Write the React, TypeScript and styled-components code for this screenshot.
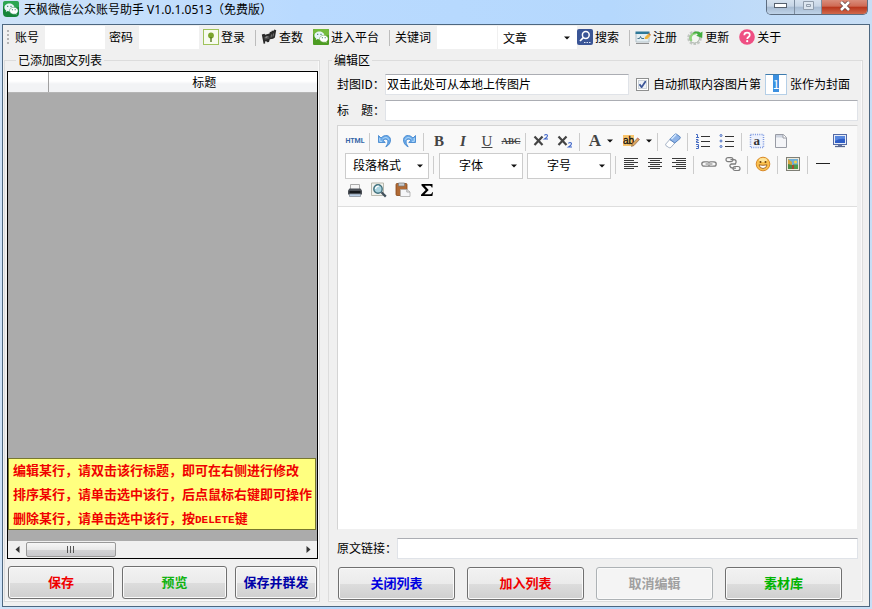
import React, { useEffect, useRef } from "react";
import styled, { createGlobalStyle } from "styled-components";

const sans = `"Noto Sans CJK SC", "Noto Sans", sans-serif`;
const serif = `"Liberation Serif", "Noto Sans CJK SC", serif`;

const Global = createGlobalStyle`
  *, *::before, *::after { box-sizing: border-box; }
  body { margin: 0; font: 12px/16px ${sans}; color: #000; background: #b9d8f8; }
  button, input, select, textarea { font: inherit; color: inherit; }
  button { padding: 0; margin: 0; background: none; border: 0; }
`;

const Window = styled.div`
  display: flex;
  flex-direction: column;
  min-height: 100vh;
  padding: 0 2px 2px;
  background: linear-gradient(90deg, #cfe3f8 0, #b9daff 300px, #b5d8fd 70%, #c8def5 100%);
`;

const TitleBar = styled.header`
  display: flex;
  align-items: flex-start;
  height: 24px;
  padding: 0 2px 0 1px;
`;

const Caption = styled.h1`
  flex: 1;
  margin: 1px 0 0;
  padding-left: 5px;
  font: 12px/18px "Noto Sans", ${sans};
  white-space: nowrap;
`;

const AppMark = styled.span`
  display: flex;
  padding-top: 1px;
`;

const WindowButtons = styled.div`
  display: flex;
  border: 1px solid #5d6d80;
  border-top: 0;
  border-radius: 0 0 5px 5px;
  overflow: hidden;
`;

const WindowButton = styled.button<{ $close?: boolean }>`
  display: flex;
  align-items: center;
  justify-content: center;
  width: ${(p) => (p.$close ? 46 : 27)}px;
  height: 14px;
  padding-bottom: 3px;
  background: ${(p) =>
    p.$close
      ? "linear-gradient(#d98d7c 0, #cf6a54 45%, #b8341b 50%, #d0694c 100%)"
      : "linear-gradient(#d6e2ef 0, #c6d5e6 45%, #a7bbd2 50%, #bfd3e8 100%)"};
  & + & { border-left: 1px solid #7d8da0; }
`;

const Client = styled.main`
  flex: 1;
  display: flex;
  flex-direction: column;
  background: #f0f0f0;
  border: 1px solid #4d6780;
`;

const Strip = styled.div`
  display: flex;
  align-items: center;
  height: 25px;
  padding-left: 4px;
  white-space: nowrap;
`;

const Grip = styled.span`
  width: 2px;
  height: 16px;
  margin-right: 6px;
  background: repeating-linear-gradient(#b4b4b4 0 2px, transparent 2px 4px);
`;

const StripLabel = styled.label`
  margin-right: 6px;
  padding-bottom: 2px;
`;

const StripInput = styled.input<{ $flush?: boolean }>`
  width: 60px;
  height: 23px;
  padding: 0 3px;
  margin-right: ${(p) => (p.$flush ? 1 : 4)}px;
  border: 0;
  background: #fff;
`;

const StripAction = styled.button`
  display: flex;
  align-items: center;
  gap: 2px;
  margin-right: 10px;
  padding-bottom: 2px;
`;

const StripRule = styled.span`
  width: 1px;
  height: 16px;
  margin-right: 5px;
  background: #bcbcbc;
`;

const Drop = styled.span<{ $framed?: boolean }>`
  display: grid;
  align-items: center;
  justify-items: end;
  width: ${(p) => (p.$framed ? 84 : 79)}px;
  height: ${(p) => (p.$framed ? 26 : 23)}px;
  margin: 0 ${(p) => (p.$framed ? 2 : 0)}px;
  background: #fff;
  border: ${(p) => (p.$framed ? "1px solid #ccc" : "0")};
  > * { grid-area: 1 / 1; }
  > svg { margin-right: ${(p) => (p.$framed ? 5 : 7)}px; pointer-events: none; }
`;

const DropSelect = styled.select<{ $centered?: boolean }>`
  appearance: none;
  width: 100%;
  height: 100%;
  border: 0;
  background: transparent;
  padding: ${(p) => (p.$centered ? "0 20px 2px 0" : "0 16px 0 5px")};
  text-align-last: ${(p) => (p.$centered ? "center" : "left")};
`;

const Body = styled.div`
  flex: 1;
  display: grid;
  grid-template-columns: 316px minmax(0, 1fr);
  gap: 8px;
  padding: 4px 6px 4px 1px;
`;

const Group = styled.fieldset<{ $wide?: boolean }>`
  display: flex;
  flex-direction: column;
  min-width: 0;
  margin: 0;
  padding: ${(p) => (p.$wide ? "8px 4px 1px 8px" : "5px 1px 2px 2px")};
  border: 1px solid #dcdcdc;
  box-shadow: inset -1px -1px #fafafa;
`;

const GroupTitle = styled.legend<{ $indent: number }>`
  margin-left: ${(p) => p.$indent}px;
  padding: 0 2px;
  height: 12px;
  line-height: 12px;
`;

const ListFrame = styled.div`
  flex: 1;
  display: flex;
  flex-direction: column;
  border: 1px solid #000;
  background: #ababab;
`;

const ListTable = styled.table`
  width: 100%;
  border-collapse: collapse;
  table-layout: fixed;
`;

const HeadCell = styled.th<{ $marker?: boolean }>`
  width: ${(p) => (p.$marker ? "40px" : "auto")};
  height: 20px;
  padding: 0 0 0 ${(p) => (p.$marker ? 0 : 43)}px;
  font-weight: 400;
  line-height: 18px;
  background: linear-gradient(#fff 0, #fff 45%, #f2f3f5 60%, #f2f3f5 100%);
  border-bottom: 1px solid #b5b5b5;
  border-right: ${(p) => (p.$marker ? "1px solid #a0a0a0" : "0")};
`;

const Tips = styled.div`
  margin: auto 1px 11px 0;
  padding: 0 0 0 4px;
  border: 1px solid #77772d;
  background: #ffff80;
  color: #f00000;
  font: bold 13px/22px ${sans};
  white-space: nowrap;
`;

const Tip = styled.p`
  margin: 0;
  height: 22px;
  & + & { margin-top: 2px; }
`;

const KeyName = styled.kbd`
  font: bold 11px/22px "Liberation Mono", monospace;
`;

const ScrollBar = styled.div`
  display: flex;
  align-items: center;
  height: 17px;
  background: #f0f0f0;
`;

const ScrollArrow = styled.button`
  display: flex;
  align-items: center;
  justify-content: center;
  width: 18px;
  height: 17px;
`;

const ScrollTrack = styled.div`
  flex: 1;
`;

const ScrollThumb = styled.div`
  display: flex;
  align-items: center;
  justify-content: center;
  width: 90px;
  height: 15px;
  border: 1px solid #989898;
  border-radius: 2px;
  background: linear-gradient(#f6f6f6 0, #e8e8e8 50%, #d3d3d5 55%, #c9c9cc 100%);
`;

const ListButtons = styled.div`
  display: grid;
  grid-template-columns: 106fr 105fr 82fr;
  gap: 8px;
  margin: 7px 1px 0;
`;

const EditButtons = styled.div`
  display: grid;
  grid-template-columns: repeat(4, 1fr);
  gap: 12px;
  margin: 8px 16px 0 1px;
`;

const PushButton = styled.button<{ $ink: string }>`
  height: 33px;
  padding-bottom: 2px;
  border: 1px solid #707070;
  border-radius: 3px;
  box-shadow: inset 0 0 0 1px #fafafa;
  background: linear-gradient(#f2f2f2 0, #ebebeb 50%, #dddddd 51%, #cfcfcf 100%);
  color: ${(p) => p.$ink};
  font: bold 13px/18px ${sans};
  &:disabled {
    border-color: #adb2b5;
    background: #f4f4f4;
  }
`;

const FormRow = styled.div<{ $top?: number }>`
  display: flex;
  align-items: center;
  margin-top: ${(p) => p.$top ?? 0}px;
  white-space: nowrap;
`;

const FormLabel = styled.label<{ $width?: number }>`
  width: ${(p) => (p.$width ? `${p.$width}px` : "auto")};
  padding-bottom: 2px;
`;

const Field = styled.input`
  flex: 1;
  min-width: 0;
  height: 21px;
  padding: 0 1px 2px;
  background: #fff;
  border: 1px solid #e0e3e8;
  border-top-color: #abadb3;
`;

const Check = styled.input`
  appearance: none;
  width: 13px;
  height: 13px;
  margin: 0 4px 0 7px;
  border: 1px solid #8e8f8f;
  background: #f2f5f8;
  box-shadow: inset 0 0 0 1px #fff, inset 0 0 0 2px #ccd3da;
  &:checked {
    background: #eef2f6
      url("data:image/svg+xml,%3Csvg xmlns='http://www.w3.org/2000/svg' viewBox='0 0 11 11'%3E%3Cpath d='M2.5 5.2 4.6 8.2 8.8 2' fill='none' stroke='%233b5698' stroke-width='1.8'/%3E%3C/svg%3E");
  }
`;

const IndexField = styled.input`
  width: 22px;
  height: 21px;
  margin: 0 3px 0 4px;
  padding: 0 0 2px;
  text-align: center;
  background: #fff;
  border: 1px solid #b5cfe7;
  border-top-color: #3d7bad;
  outline: 0;
  &::selection { background: #3c90e0; color: #fff; }
`;

const RowEnd = styled.span`
  margin-right: 8px;
  padding-bottom: 2px;
`;

const Editor = styled.section`
  flex: 1;
  display: flex;
  flex-direction: column;
  margin-top: 4px;
  border: 1px solid #d4d4d4;
  border-right-color: #f0f0f0;
  border-bottom-color: #f0f0f0;
  background: #fff;
`;

const EditorTools = styled.div`
  padding: 4px 5px 4px 5px;
  background: #f9f9f9;
  border-bottom: 1px solid #dedede;
`;

const ToolRow = styled.div<{ $tall?: boolean }>`
  display: flex;
  align-items: flex-start;
  height: ${(p) => (p.$tall ? 26 : 23)}px;
`;

const Tool = styled.button<{ $menu?: boolean; $end?: boolean }>`
  display: flex;
  align-items: center;
  justify-content: center;
  gap: 6px;
  width: ${(p) => (p.$menu ? 36 : 24)}px;
  height: 22px;
  margin-left: ${(p) => (p.$end ? "auto" : "0")};
`;

const ToolRule = styled.span`
  width: 1px;
  height: 18px;
  margin: 3px 3px 0 2px;
  background: #ccc;
`;

const Glyph = styled.span<{ $look?: "italic" | "under" | "strike" | "code" | "plain" }>`
  color: ${(p) => (p.$look === "code" ? "#3566a8" : "#444")};
  font-family: ${(p) => (p.$look === "code" ? "Roboto, sans-serif" : serif)};
  font-size: ${(p) => (p.$look === "code" ? 7 : p.$look === "strike" ? 9 : p.$look === "plain" ? 17 : 15)}px;
  font-weight: ${(p) => (p.$look === "under" ? 400 : 700)};
  font-style: ${(p) => (p.$look === "italic" ? "italic" : "normal")};
  text-decoration: ${(p) => (p.$look === "under" ? "underline" : p.$look === "strike" ? "line-through" : "none")};
`;

const Content = styled.textarea`
  flex: 1;
  width: 100%;
  padding: 6px;
  border: 0;
  outline: 0;
  resize: none;
  background: #fff;
`;

type IconProps = { children: React.ReactNode; w?: number; h?: number };
const Icon = ({ children, w = 16, h = 16 }: IconProps) => (
  <svg width={w} height={h} viewBox={`0 0 ${w} ${h}`} fill="none" aria-hidden="true">
    {children}
  </svg>
);

const Caret = () => (
  <Icon w={6} h={4}><path d="M0 .5h6L3 3.5z" fill="#111" /></Icon>
);

const WeChat = ({ round }: { round?: boolean }) => (
  <Icon>
    <rect width="16" height="16" rx={round ? 4 : 1} fill={round ? "#16853a" : "#4d9c22"} />
    <path d="M0 2q0-2 2-2h12q2 0 2 2v4Q8 9 0 5z" fill={round ? "#2ca653" : "#74bb3d"} />
    <path d="M6.4 2.4c-2.8 0-5 1.8-5 4 0 1.3.7 2.4 1.8 3.1l-.4 1.6 1.9-1c.5.2 1.1.3 1.7.3 2.800 0 5-1.800 5-4s-2.200-4-5-4z" fill="#e9f5f8" />
    <path d="M10.800 6.300c-2.400 0-4.300 1.500-4.300 3.400s1.900 3.500 4.300 3.500c.5 0 1-.1 1.400-.2l1.700.9-.4-1.400c1-.7 1.600-1.700 1.600-2.800 0-1.900-1.900-3.400-4.300-3.400z" fill="#fff" stroke={round ? "#2f8b55" : "#66a545"} strokeWidth=".5" />
    <path d="M4.700 4.700v1.200M8 4.700v1.200M9.400 8.300v1M12.200 8.300v1" stroke="#3c7c6a" strokeWidth="1.100" />
  </Icon>
);

const LoginIcon = () => (
  <Icon>
    <rect x=".5" y=".5" width="15" height="15" fill="#f7fbef" stroke="#9fc25b" />
    <circle cx="8" cy="6.500" r="2.900" fill="#7ba52d" />
    <path d="M8 8v5" stroke="#54791c" strokeWidth="1.400" />
  </Icon>
);

const CountIcon = () => (
  <Icon>
    <path d="m.8 5.500 2.700-.8.600 1 4.400-1.200.4-1.700 1.300.3.700-1.700 1.300.5 1.200-1.500 1.800.8-1.300 7.200-1.800 1.300-3.300.5-.8 2.700-2 .3-.5-1-1.500.4.200 1.800-1.600.400z" fill="#2a2a2a" />
    <path d="m3.200 8 5-1.200.3 3-4.700 1z" fill="#505050" />
    <path d="m4.500 8.300 2-.5" stroke="#b5b5b5" />
    <path d="m10.500 5.500-.5 3M12.500 4.500 12 7.500" stroke="#8a8a8a" strokeWidth=".8" />
  </Icon>
);

const SearchIcon = () => (
  <Icon>
    <rect width="16" height="16" rx="2" fill="#3a5596" />
    <circle cx="8.800" cy="6" r="3.400" stroke="#fff" strokeWidth="1.500" />
    <path d="M6.300 8.600 3 12" stroke="#fff" strokeWidth="1.700" />
    <path d="M7 13.500h1.500M9.500 13.500H11M12 13.500h1.500" stroke="#dde6f6" />
  </Icon>
);

const RegisterIcon = () => (
  <Icon>
    <path d="M1 4h13v9H1z" fill="#e3edf2" stroke="#b4c2c9" />
    <path d="M.5 2.500h14v2.500H.5z" fill="#2f7898" />
    <path d="M2.500 9.500h2l1-2 1 2H9" stroke="#43728a" />
    <path d="m9.500 10 .5-2 3-3 2.300 1.800-3 3.200z" fill="#efb43d" />
    <path d="m13 5 1-1 2 1.700-.8 1.100z" fill="#c97b3a" />
    <path d="M1 14.500h13" stroke="#8f8f8f" />
  </Icon>
);

const UpdateIcon = () => (
  <Icon>
    <circle cx="7.500" cy="9" r="5.800" stroke="#c3c8c3" strokeWidth="3" strokeDasharray="2.500 1.200" />
    <circle cx="7.500" cy="9" r="5" fill="#f3f6f1" stroke="#aeb6ae" />
    <path d="M4.500 12C2 8 5 4 9 4.500" stroke="#8fd37d" strokeWidth="2.200" />
    <path d="M6 3.800c2.500-2 6-1.700 7.500 0l2-1.300-.3 6.500-6-2.200 2-1.300C10 4.300 8 3.800 6 4.800z" fill="#43ae3e" />
  </Icon>
);

const AboutIcon = () => (
  <Icon>
    <circle cx="8" cy="8" r="7.800" fill="#ef4f83" />
    <path d="M5.300 6.200C5.300 4.700 6.400 3.700 8 3.700s2.800 1 2.800 2.300c0 2-2.600 2-2.600 4" stroke="#fff" strokeWidth="1.700" />
    <circle cx="8.200" cy="12.200" r="1.100" fill="#fff" />
  </Icon>
);

const UndoIcon = ({ flip }: { flip?: boolean }) => (
  <Icon>
    <g transform={flip ? "matrix(-1 0 0 1 16 0)" : undefined}>
      <path d="M1.500 2.500v7h6.800L6 7.300c1.300-1.400 3.900-1.600 4.700.3.700 1.700-.2 3.900-1.900 6.200 3-1.200 5-4.200 4.700-7.300C13 2.200 7.800.8 4 5z" fill="#6aaae9" stroke="#3a80cb" strokeWidth=".8" />
      <path d="M2.800 5v3.300H5M5.500 6c2-2 5.500-2 6.300.8" stroke="#b9ddfa" />
    </g>
  </Icon>
);

const ScriptIcon = ({ low }: { low?: boolean }) => (
  <Icon>
    <path d="m1.500 3.500 8 8.500M9.500 3.500l-8 8.500" stroke="#444" strokeWidth="2.200" />
    <path transform={low ? "translate(0 9)" : "translate(0 1)"} d="M11.500 1.500q0-1 1.500-1 1.500 0 1.500 1.300 0 1.200-3 3.200h3.500" stroke="#3b62c8" strokeWidth="1.100" />
  </Icon>
);

const HighlightIcon = () => (
  <Icon w={17}>
    <rect y="2" width="11" height="11" fill="#f8c46c" />
    <text x="0" y="11" fontFamily="Liberation Sans, sans-serif" fontSize="10" fill="#111" stroke="#111" strokeWidth=".3">ab</text>
    <path d="m8.500 13.500 1-3 5-5.500 2 1.500-5.500 6z" fill="#dba45e" stroke="#81613d" strokeWidth=".6" />
    <path d="m14 5 2 1.500" stroke="#db7363" />
  </Icon>
);

const EraserIcon = () => (
  <Icon>
    <path d="m.8 11 4-4.500 5 3.500-4 4.500q-1 .6-2 0l-2.800-1.800q-.8-.7-.2-1.700z" fill="#fff" stroke="#8fa0b8" strokeWidth=".8" />
    <path d="m4.800 6.500 4.700-5q1-1 2-.3l3.300 2.400q1 .9.200 2L9.800 10z" fill="#8fb4e8" stroke="#4373b5" strokeWidth=".8" />
    <path d="m6.500 6 4.500-4.500" stroke="#d2e7fd" strokeWidth="1.600" />
  </Icon>
);

const ListIcon = ({ numbered }: { numbered?: boolean }) => (
  <Icon>
    <path d="M6 3.500h9M6 8.500h9M6 13.500h9" stroke="#333" />
    {numbered ? (
      <path d="M1 1.500h1.500v3M1 4.500h3M1 6.500h2v1.500H1.500v1.500H4M1 11.500h2.500v4H1M1.500 13.500h2" stroke="#456bc2" />
    ) : (
      <g stroke="#456bc2"><circle cx="2" cy="2.500" r="1" /><circle cx="2" cy="8" r="1" /><circle cx="2" cy="13.500" r="1" /></g>
    )}
  </Icon>
);

const AnchorIcon = () => (
  <Icon>
    <rect x="1.500" y="1.500" width="13" height="13" fill="#eef2fd" stroke="#7b97e0" strokeWidth="1.500" strokeDasharray="1 1.200" />
    <text x="4.500" y="12" fontFamily="Liberation Serif, serif" fontSize="13" fontWeight="700" fill="#333">a</text>
  </Icon>
);

const PageIcon = () => (
  <Icon>
    <path d="M2.500 1.500h8l3 3v10h-11z" fill="#f4f5f8" stroke="#999ca5" />
    <path d="M3 2h7v2.500H3z" fill="#cdd3df" />
    <path d="M10 1.500v3.500h3.500" fill="#fff" stroke="#999ca5" />
  </Icon>
);

const ScreenIcon = () => (
  <Icon>
    <rect x="1.500" y="1.500" width="13" height="10" fill="#e7ecf7" stroke="#5269a5" />
    <path d="M3 3h10v7H3z" fill="#2e5dc6" />
    <path d="M3 3h10v3Q8 5 3 8z" fill="#5787df" />
    <path d="M6 12h4v1.500H6z" fill="#6c7897" />
    <path d="M3 13.500h10" stroke="#566791" strokeWidth="1.300" />
  </Icon>
);

const AlignIcon = ({ side }: { side: "left" | "center" | "right" }) => {
  const start = { left: 1, center: 3, right: 5 }[side];
  return (
    <Icon>
      {[2, 4, 6, 8, 10, 12].map((y, i) => (
        <path key={y} d={i % 2 ? `M${start} ${y + 0.5}h10` : `M1 ${y + 0.5}h14`} stroke="#3a3a3a" />
      ))}
    </Icon>
  );
};

const LinkIcon = () => (
  <Icon>
    <rect x=".8" y="5.800" width="7.700" height="4.400" rx="2.200" stroke="#7d7d7d" strokeWidth="1.300" />
    <rect x="7.500" y="5.800" width="7.700" height="4.400" rx="2.200" stroke="#7d7d7d" strokeWidth="1.300" />
    <path d="M4 8h8" stroke="#fff" strokeWidth="2.400" /><path d="M4.500 8h7" stroke="#777" />
  </Icon>
);

const UnlinkIcon = () => (
  <Icon>
    <rect x="1" y="1.700" width="7" height="4" rx="2" stroke="#7d7d7d" strokeWidth="1.200" />
    <rect x="8" y="10.500" width="7" height="4" rx="2" stroke="#7d7d7d" strokeWidth="1.200" />
    <path d="M5.500 3.700H9q2.500.3 2 2.500L10.300 8H6.500q-2 .5-1.500 2.200.5 1.800 3 2H11" stroke="#7d7d7d" strokeWidth="1.300" />
  </Icon>
);

const SmileIcon = () => (
  <Icon>
    <circle cx="8" cy="8" r="6.800" fill="#fac04e" stroke="#d98a29" />
    <ellipse cx="8" cy="4" rx="4" ry="2" fill="#fde49b" />
    <path d="M4 8.800q4 1 8 0-.5 3.700-4 3.700T4 8.800z" fill="#fff" stroke="#9d5f1d" strokeWidth=".9" />
    <path d="M5.500 5v2M10.500 5v2" stroke="#7b4d12" strokeWidth="1.600" />
  </Icon>
);

const PictureIcon = () => (
  <Icon>
    <rect x="1.500" y="1.500" width="13" height="13" fill="#eeeadb" stroke="#7f7f76" />
    <path d="M3 3h10v10H3z" fill="#72afd7" />
    <path d="M3 8h4v5H3z" fill="#4b8b45" /><path d="m3 3 4 3v3L3 8z" fill="#d4a43d" />
    <path d="M8 8.500h5V13H8z" fill="#4c9a4b" /><circle cx="10.500" cy="6" r="1.600" fill="#f1d04c" /><path d="M7 9h2v4H7z" fill="#a8482f" />
  </Icon>
);

const PrintIcon = () => (
  <Icon>
    <path d="M3.500 7.500V2.500h9v5" fill="#f5f5f5" stroke="#aaa" />
    <path d="M2.500 6.500h11l1.500 2v4H1v-4z" fill="#4a4f56" />
    <path d="M2.500 9h11v2.500h-11z" fill="#15181c" />
    <path d="M2.500 12h11v2.500h-11z" fill="#b9cde4" stroke="#808790" strokeWidth=".7" />
  </Icon>
);

const PreviewIcon = () => (
  <Icon>
    <path d="M.5 1h12v12.500H.5z" fill="#f2f2ed" stroke="#b9b9ae" />
    <circle cx="7" cy="7" r="4.200" fill="#a9d3df" stroke="#42717d" strokeWidth="1.400" />
    <path d="M4.500 7q.5-2.800 3.300-2.800" stroke="#fff" strokeWidth="1.200" />
    <path d="m10.500 10.300 4.300 4.300" stroke="#42515c" strokeWidth="2.300" />
  </Icon>
);

const PasteIcon = () => (
  <Icon>
    <rect x="1" y="1.500" width="11" height="12" rx="1" fill="#b16a35" stroke="#854719" strokeWidth=".8" />
    <path d="M3.500 1h6v3h-6z" fill="#c9ccd0" stroke="#777" strokeWidth=".7" />
    <path d="M5.500 7.500h6.500l3 2.500v4.500H5.500z" fill="#f5f6f8" stroke="#aaa" strokeWidth=".8" />
    <path d="M11.800 7.500V10H15" stroke="#999" strokeWidth=".8" />
  </Icon>
);

const SigmaIcon = () => (
  <Icon>
    <path d="M2.500 2h11v3.500h-.8Q12.400 3.700 11 3.700H5.800L9.700 8l-4.200 4.300h5.700q1.500 0 2-2h.8l-.6 3.700H2v-1.200L6.700 8 2.500 3.500z" fill="#000" />
  </Icon>
);

const PickList = ({ name, options }: { name: string; options: string[] }) => (
  <Drop $framed>
    <DropSelect $centered aria-label={name}>
      {options.map((o) => <option key={o}>{o}</option>)}
    </DropSelect>
    <Caret />
  </Drop>
);

export default function App() {
  const indexRef = useRef<HTMLInputElement>(null);
  useEffect(() => {
    indexRef.current?.focus();
    indexRef.current?.select();
  }, []);

  return (
    <>
      <Global />
      <Window>
        <TitleBar>
          <AppMark><WeChat round /></AppMark>
          <Caption>天枫微信公众账号助手 V1.0.1.0513（免费版）</Caption>
          <WindowButtons>
            <WindowButton aria-label="最小化">
              <Icon w={13} h={6}><rect x=".5" y=".5" width="12" height="4" fill="#fff" stroke="#56606d" /></Icon>
            </WindowButton>
            <WindowButton aria-label="最大化" disabled>
              <Icon w={11} h={9}><path d="M.5.5h10v8H.5zM3.500 3.500h4v2h-4z" fill="#dce6f0" stroke="#909dac" /></Icon>
            </WindowButton>
            <WindowButton $close aria-label="关闭">
              <Icon w={12} h={10}>
                <path d="m2 1 8 8M10 1 2 9" stroke="#664242" strokeWidth="4" />
                <path d="m2 1 8 8M10 1 2 9" stroke="#fff" strokeWidth="2.500" />
              </Icon>
            </WindowButton>
          </WindowButtons>
        </TitleBar>

        <Client>
          <Strip role="toolbar">
            <Grip />
            <StripLabel htmlFor="account">账号</StripLabel>
            <StripInput id="account" />
            <StripLabel htmlFor="password">密码</StripLabel>
            <StripInput id="password" type="password" />
            <StripAction><LoginIcon />登录</StripAction>
            <StripRule />
            <StripAction><CountIcon />查数</StripAction>
            <StripAction><WeChat />进入平台</StripAction>
            <StripRule />
            <StripLabel htmlFor="keyword">关键词</StripLabel>
            <StripInput id="keyword" $flush />
            <Drop>
              <DropSelect aria-label="搜索类型"><option>文章</option><option>公众号</option></DropSelect>
              <Caret />
            </Drop>
            <StripAction><SearchIcon />搜索</StripAction>
            <StripRule />
            <StripAction><RegisterIcon />注册</StripAction>
            <StripAction><UpdateIcon />更新</StripAction>
            <StripAction><AboutIcon />关于</StripAction>
          </Strip>

          <Body>
            <Group>
              <GroupTitle $indent={9}>已添加图文列表</GroupTitle>
              <ListFrame>
                <ListTable>
                  <thead>
                    <tr><HeadCell $marker aria-label="行" /><HeadCell>标题</HeadCell></tr>
                  </thead>
                </ListTable>
                <Tips>
                  <Tip>编辑某行，请双击该行标题，即可在右侧进行修改</Tip>
                  <Tip>排序某行，请单击选中该行，后点鼠标右键即可操作</Tip>
                  <Tip>删除某行，请单击选中该行，按<KeyName>DELETE</KeyName>键</Tip>
                </Tips>
                <ScrollBar>
                  <ScrollArrow aria-label="向左滚动"><Icon w={5} h={7}><path d="M4.500 0v7L.5 3.500z" fill="#333" /></Icon></ScrollArrow>
                  <ScrollTrack>
                    <ScrollThumb><Icon w={8} h={7}><path d="M.5 0v7M3.500 0v7M6.500 0v7" stroke="#555" /></Icon></ScrollThumb>
                  </ScrollTrack>
                  <ScrollArrow aria-label="向右滚动"><Icon w={5} h={7}><path d="M.5 0v7l4-3.500z" fill="#333" /></Icon></ScrollArrow>
                </ScrollBar>
              </ListFrame>
              <ListButtons>
                <PushButton $ink="#f00000">保存</PushButton>
                <PushButton $ink="#12b312">预览</PushButton>
                <PushButton $ink="#0000a8">保存并群发</PushButton>
              </ListButtons>
            </Group>

            <Group $wide>
              <GroupTitle $indent={-5}>编辑区</GroupTitle>
              <FormRow>
                <FormLabel $width={48} htmlFor="cover">封图ID：</FormLabel>
                <Field id="cover" defaultValue="双击此处可从本地上传图片" />
                <Check id="auto" type="checkbox" defaultChecked />
                <FormLabel htmlFor="auto">自动抓取内容图片第</FormLabel>
                <IndexField ref={indexRef} aria-label="图片序号" defaultValue="1" />
                <RowEnd>张作为封面</RowEnd>
              </FormRow>
              <FormRow $top={5}>
                <FormLabel $width={48} htmlFor="title">标　题：</FormLabel>
                <Field id="title" />
              </FormRow>

              <Editor>
                <EditorTools role="toolbar">
                  <ToolRow>
                    <Tool aria-label="源代码"><Glyph $look="code">HTML</Glyph></Tool>
                    <ToolRule />
                    <Tool aria-label="撤销"><UndoIcon /></Tool>
                    <Tool aria-label="重做"><UndoIcon flip /></Tool>
                    <ToolRule />
                    <Tool><Glyph>B</Glyph></Tool>
                    <Tool><Glyph $look="italic">I</Glyph></Tool>
                    <Tool><Glyph $look="under">U</Glyph></Tool>
                    <Tool><Glyph $look="strike">ABC</Glyph></Tool>
                    <ToolRule />
                    <Tool aria-label="上标"><ScriptIcon /></Tool>
                    <Tool aria-label="下标"><ScriptIcon low /></Tool>
                    <ToolRule />
                    <Tool $menu><Glyph $look="plain">A</Glyph><Caret /></Tool>
                    <Tool $menu aria-label="背景色"><HighlightIcon /><Caret /></Tool>
                    <ToolRule />
                    <Tool aria-label="清除格式"><EraserIcon /></Tool>
                    <ToolRule />
                    <Tool aria-label="编号"><ListIcon numbered /></Tool>
                    <Tool aria-label="项目符号"><ListIcon /></Tool>
                    <ToolRule />
                    <Tool aria-label="锚点"><AnchorIcon /></Tool>
                    <Tool aria-label="新建"><PageIcon /></Tool>
                    <Tool $end aria-label="全屏"><ScreenIcon /></Tool>
                  </ToolRow>
                  <ToolRow $tall>
                    <PickList name="段落" options={["段落格式", "正文", "标题"]} />
                    <ToolRule />
                    <PickList name="字体" options={["字体", "宋体", "黑体"]} />
                    <PickList name="字号" options={["字号", "12px", "14px"]} />
                    <ToolRule />
                    <Tool aria-label="左对齐"><AlignIcon side="left" /></Tool>
                    <Tool aria-label="居中"><AlignIcon side="center" /></Tool>
                    <Tool aria-label="右对齐"><AlignIcon side="right" /></Tool>
                    <ToolRule />
                    <Tool aria-label="链接"><LinkIcon /></Tool>
                    <Tool aria-label="取消链接"><UnlinkIcon /></Tool>
                    <ToolRule />
                    <Tool aria-label="表情"><SmileIcon /></Tool>
                    <ToolRule />
                    <Tool aria-label="图片"><PictureIcon /></Tool>
                    <ToolRule />
                    <Tool aria-label="横线"><Icon><path d="M1 7.500h14" stroke="#222" /></Icon></Tool>
                  </ToolRow>
                  <ToolRow>
                    <Tool aria-label="打印"><PrintIcon /></Tool>
                    <Tool aria-label="预览"><PreviewIcon /></Tool>
                    <Tool aria-label="粘贴"><PasteIcon /></Tool>
                    <Tool aria-label="公式"><SigmaIcon /></Tool>
                  </ToolRow>
                </EditorTools>
                <Content aria-label="正文" />
              </Editor>

              <FormRow $top={8}>
                <FormLabel $width={60} htmlFor="source">原文链接：</FormLabel>
                <Field id="source" />
              </FormRow>
              <EditButtons>
                <PushButton $ink="#0000e0">关闭列表</PushButton>
                <PushButton $ink="#f00000">加入列表</PushButton>
                <PushButton $ink="#a0a0a0" disabled>取消编辑</PushButton>
                <PushButton $ink="#00b400">素材库</PushButton>
              </EditButtons>
            </Group>
          </Body>
        </Client>
      </Window>
    </>
  );
}
